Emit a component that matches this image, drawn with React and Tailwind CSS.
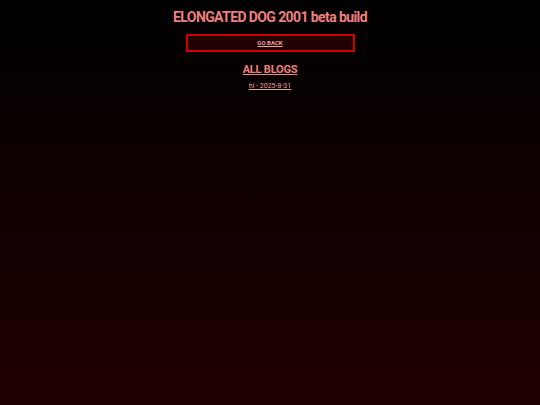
import React from 'react';

const App = () => {
  return (
    <div
      className="min-h-[405px] w-full bg-[linear-gradient(to_bottom,#000000,#200000)] text-[#f08080] flex flex-col items-center"
      style={{ fontFamily: 'Roboto, "Liberation Sans", sans-serif' }}
    >
      <h1 className="mt-[9px] text-[14px] leading-[17px] font-bold tracking-[-0.6px]">ELONGATED DOG 2001 beta build</h1>
      <button className="mt-[8px] w-[169px] h-[18px] border-2 border-[#d00000] bg-[#200000] text-[6px] font-bold underline leading-none text-[#f0a0a0]">
        GO BACK
      </button>
      <h2 className="mt-[11px] text-[11px] leading-[13px] font-bold underline tracking-[-0.2px]">ALL BLOGS</h2>
      <a href="#" className="mt-[6px] text-[7px] leading-[9px] underline text-[#e8a0a0]">hi - 2025-8-31</a>
    </div>
  );
};

export default App;
